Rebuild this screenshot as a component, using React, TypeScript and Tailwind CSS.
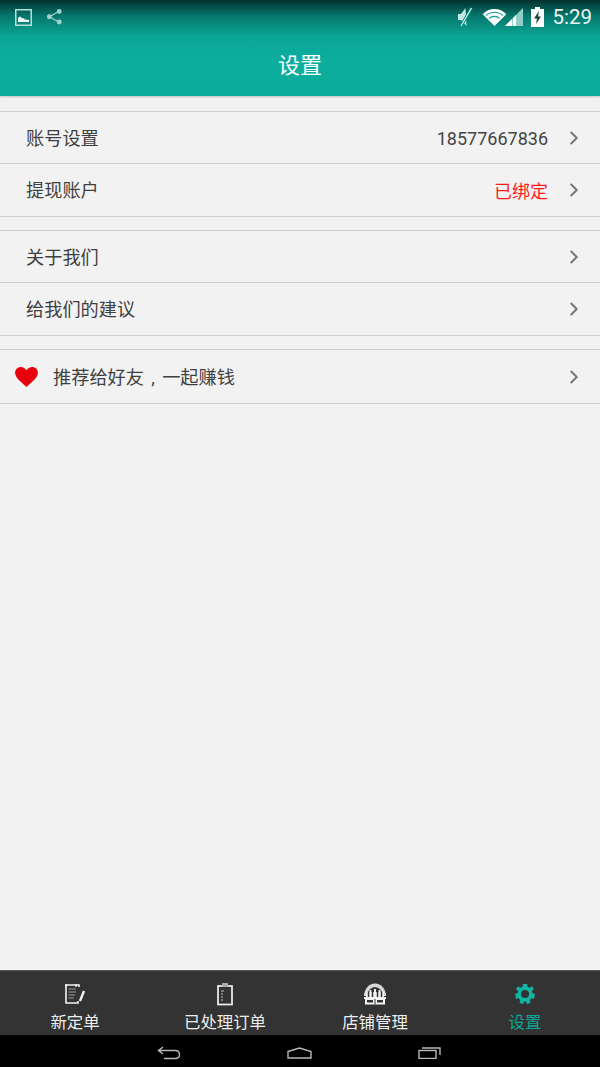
import { ChevronRight } from "lucide-react";
import type { ReactNode } from "react";

const font = "font-['Roboto','Noto_Sans_CJK_SC',sans-serif]";

function StatusBar() {
  return (
    <div className="flex h-[34px] items-center justify-between pl-[15px] pr-[8px]">
      <div className="flex items-center gap-[14px]">
        <svg width="17" height="17" viewBox="0 0 17 17">
          <rect x="0.75" y="0.75" width="15.5" height="15.5" fill="none" stroke="#b5dfda" strokeWidth="1.5" />
          <path d="M3 13 L3 9 L5 7.5 L7 9 L9 9.5 L10 10.5 L14 11 L14 13 Z" fill="#eef8f7" />
        </svg>
        <svg width="17" height="18" viewBox="0 0 18 18">
          <path d="M14 3 L3.5 8.7 L14 14.5" fill="none" stroke="#9fd2cc" strokeWidth="1.3" />
          <circle cx="14" cy="3.2" r="2.6" fill="#9fd2cc" />
          <circle cx="3.5" cy="8.7" r="2.6" fill="#9fd2cc" />
          <circle cx="14" cy="14.3" r="2.6" fill="#9fd2cc" />
        </svg>
      </div>
      <div className="flex items-center">
        <svg width="16" height="20" viewBox="0 0 16 20" className="mr-[9px]">
          <path d="M1 7 L4 7 L8.500 1 L9.500 19 L4 13 L1 13 Z" fill="#c3e6e2" />
          <path d="M14.5 1 L4 19" stroke="#078e81" strokeWidth="3" />
          <path d="M14.5 1 L4 19" stroke="#d6eeeb" strokeWidth="1.2" />
        </svg>
        <svg width="25" height="17" viewBox="0 0 26 18">
          <path d="M0.5 5.5 A17 17 0 0 1 25.5 5.5 L13 18 Z" fill="#ffffff" />
          <path d="M4 7 A13 13 0 0 1 22 7" fill="none" stroke="#0b9f92" strokeWidth="1.2" />
          <path d="M7.5 10 A8 8 0 0 1 18.5 10" fill="none" stroke="#0b9f92" strokeWidth="1.2" />
        </svg>
        <svg width="18" height="18" viewBox="0 0 18 18" className="ml-[-2px]">
          <path d="M0 18 L18 0 L18 18 Z" fill="#8fcfc8" />
          <path d="M0 18 L7 11 L7 18 Z M8 18 L8 10 L11 7 L11 18 Z" fill="#ffffff" />
        </svg>
        <svg width="13" height="20" viewBox="0 0 13 20" className="ml-[8px]">
          <path d="M4 0 H9 V2 H13 V20 H0 V2 H4 Z" fill="#ffffff" />
          <path d="M8 4 L3 11.5 H6 L5 17 L10 9.5 H7 Z" fill="#17403b" />
        </svg>
        <span className={`ml-[8px] text-[20.5px] leading-none text-[#eaf7f5] ${font}`}>5:29</span>
      </div>
    </div>
  );
}

function Row({ children, value, valueClass, last, tall }: { children: ReactNode; value?: string; valueClass?: string; last?: boolean; tall?: boolean }) {
  return (
    <div className={`flex ${tall ? "h-[53px]" : "h-[52px]"} items-center pr-[18px] ${last ? "" : "border-b border-[#cfcfcf]"}`}>
      {children}
      {value && <span className={`ml-auto mr-[15px] pt-[2px] text-[18px] ${valueClass}`}>{value}</span>}
      <ChevronRight size={22} strokeWidth={2.2} className={`text-[#777777] ${value ? "" : "ml-auto"} mr-[-3px]`} />
    </div>
  );
}

function TabItem({ icon, label, active }: { icon: ReactNode; label: string; active?: boolean }) {
  return (
    <div className="flex flex-1 flex-col items-center pt-[10px]">
      <div className="flex h-[25px] items-center">{icon}</div>
      <span className={`mt-[5px] text-[16.4px] leading-[24px] ${active ? "text-[#0da594]" : "text-[#eeeeee]"}`}>{label}</span>
    </div>
  );
}

export default function App() {
  return (
    <div className={`flex h-[1067px] w-[600px] flex-col overflow-hidden bg-[#f2f2f3] ${font}`}>
      <header className="h-[96px] shrink-0 bg-[linear-gradient(to_bottom,#02312d_0px,#07776c_16px,#0aa595_36px,#0cae9e_60px,#0cab9b_100%)] shadow-[0_1px_2px_rgba(0,0,0,0.2)]">
        <StatusBar />
        <div className="flex h-[62px] items-center justify-center text-[22px] text-white">设置</div>
      </header>

      <main className="flex-1 text-[18.2px] text-[#3f3f3f]">
        <section className="mt-[15px] border-y border-[#cfcfcf]">
          <Row value="18577667836" valueClass="text-[#444444]">
            <span className="pl-[26px] pt-[2px]">账号设置</span>
          </Row>
          <Row value="已绑定" valueClass="text-[#ff1a1a]" last>
            <span className="pl-[26px] pt-[2px]">提现账户</span>
          </Row>
        </section>

        <section className="mt-[13px] border-y border-[#cfcfcf]">
          <Row>
            <span className="pl-[26px] pt-[2px]">关于我们</span>
          </Row>
          <Row last>
            <span className="pl-[26px] pt-[2px]">给我们的建议</span>
          </Row>
        </section>

        <section className="mt-[13px] border-y border-[#cfcfcf]">
          <Row last tall>
            <svg width="23" height="20" viewBox="0 0 24 21" className="ml-[15px] mr-[15px]">
              <path
                d="M12 21 C9 17.5 0 12 0 6 C0 2.5 3 0 6 0 C8.5 0 10.8 1.3 12 3.5 C13.2 1.3 15.5 0 18 0 C21 0 24 2.5 24 6 C24 12 15 17.5 12 21 Z"
                fill="#e8000d"
              />
            </svg>
            <span className="pt-[2px]">
              推荐给好友<span className="inline-block w-[1em] text-center">,</span>一起赚钱
            </span>
          </Row>
        </section>
      </main>

      <nav className="flex h-[65px] shrink-0 border-t border-[#555555] bg-[#333333]">
        <TabItem
          label="新定单"
          icon={
            <svg width="22" height="22" viewBox="0 0 22 22" fill="none" stroke="#f2f2f2">
              <path d="M15 4 V2 H2 V20 H14 V18" strokeWidth="1.6" />
              <path d="M2 1 V4 M12 1 V4" strokeWidth="1.4" />
              <path d="M4.5 6 H12 M4.5 9 H12 M4.5 12 H11 M4.5 15 H10" stroke="#999999" strokeWidth="1" />
              <path d="M20 8 L16 18" strokeWidth="2.4" />
            </svg>
          }
        />
        <TabItem
          label="已处理订单"
          icon={
            <svg width="18" height="24" viewBox="0 0 18 24" fill="none" stroke="#f2f2f2">
              <rect x="2" y="4" width="14" height="18.5" strokeWidth="1.7" />
              <rect x="6" y="1" width="6" height="4" fill="#aaaaaa" stroke="none" />
              <path d="M5 9 H8 M5 12 H7 M5 15 H7 M5 18 H7" stroke="#bbbbbb" strokeWidth="1" />
            </svg>
          }
        />
        <TabItem
          label="店铺管理"
          icon={
            <svg width="24" height="22" viewBox="0 0 24 22">
              <path d="M1 13 A11 12.500 0 0 1 23 13 Z" fill="#d8d8d8" />
              <path d="M4 13 A8 9 0 0 1 20 13 Z" fill="#333333" />
              <path d="M3 9 H21 V14 H3 Z M6.500 7 H8.500 V9 H6.500 Z M11 6 H13 V9 H11 Z M15.500 7 H17.500 V9 H15.500 Z" fill="#f4f4f4" />
              <path d="M5.500 9 V14 M9.500 7 V14 M14.500 7 V14 M18.500 9 V14" stroke="#333333" strokeWidth="1.500" />
              <path d="M1 14 H23 V16 H1 Z M2 16 H22 V21.500 H2 Z" fill="#f4f4f4" />
              <path d="M4 17 H10 V19.500 H4 Z M14 17 H20 V19.500 H14 Z M11.500 16 H12.500 V21.500 H11.500 Z" fill="#333333" />
            </svg>
          }
        />
        <TabItem
          active
          label="设置"
          icon={
            <svg width="20" height="20" viewBox="0 0 20 20">
              <path
                d="M10 6 A4 4 0 1 0 10 14 A4 4 0 1 0 10 6 Z M8 0 H12 L12.500 2.800 L14.800 3.800 L17.100 2.200 L18.900 5 L16.900 6.900 L17.200 9 L20 10 L18.900 15 L16.300 14.300 L14.800 16.200 L15.500 18.900 L12 20 L10.800 17.500 H9.200 L8 20 L4.500 18.900 L5.200 16.200 L3.700 14.300 L1.100 15 L0 10 L2.800 9 L3.100 6.900 L1.100 5 L2.900 2.200 L5.200 3.800 L7.500 2.800 Z"
                fill="#0db5a2"
                fillRule="evenodd"
              />
            </svg>
          }
        />
      </nav>

      <div className="flex h-[32px] shrink-0 items-center justify-center gap-[106px] bg-black pt-[3px] pr-[2px]">
        <svg width="24" height="14" viewBox="0 0 24 14" fill="none" stroke="#b8b8b8" strokeWidth="1.4">
          <path d="M6 1 L1.500 4.500 L6 8 M1.500 4.500 H18 C24 4.500 24 12.500 18 12.500 H7" />
        </svg>
        <svg width="25" height="12" viewBox="0 0 25 12" fill="none" stroke="#b8b8b8" strokeWidth="1.4">
          <path d="M1 4.500 L12.500 1 L24 4.500 V11 H1 Z" />
        </svg>
        <svg width="23" height="13" viewBox="0 0 23 13" fill="none" stroke="#b8b8b8" strokeWidth="1.4">
          <rect x="1" y="4.500" width="17" height="8" />
          <path d="M4 2 H22 V9" />
        </svg>
      </div>
    </div>
  );
}
